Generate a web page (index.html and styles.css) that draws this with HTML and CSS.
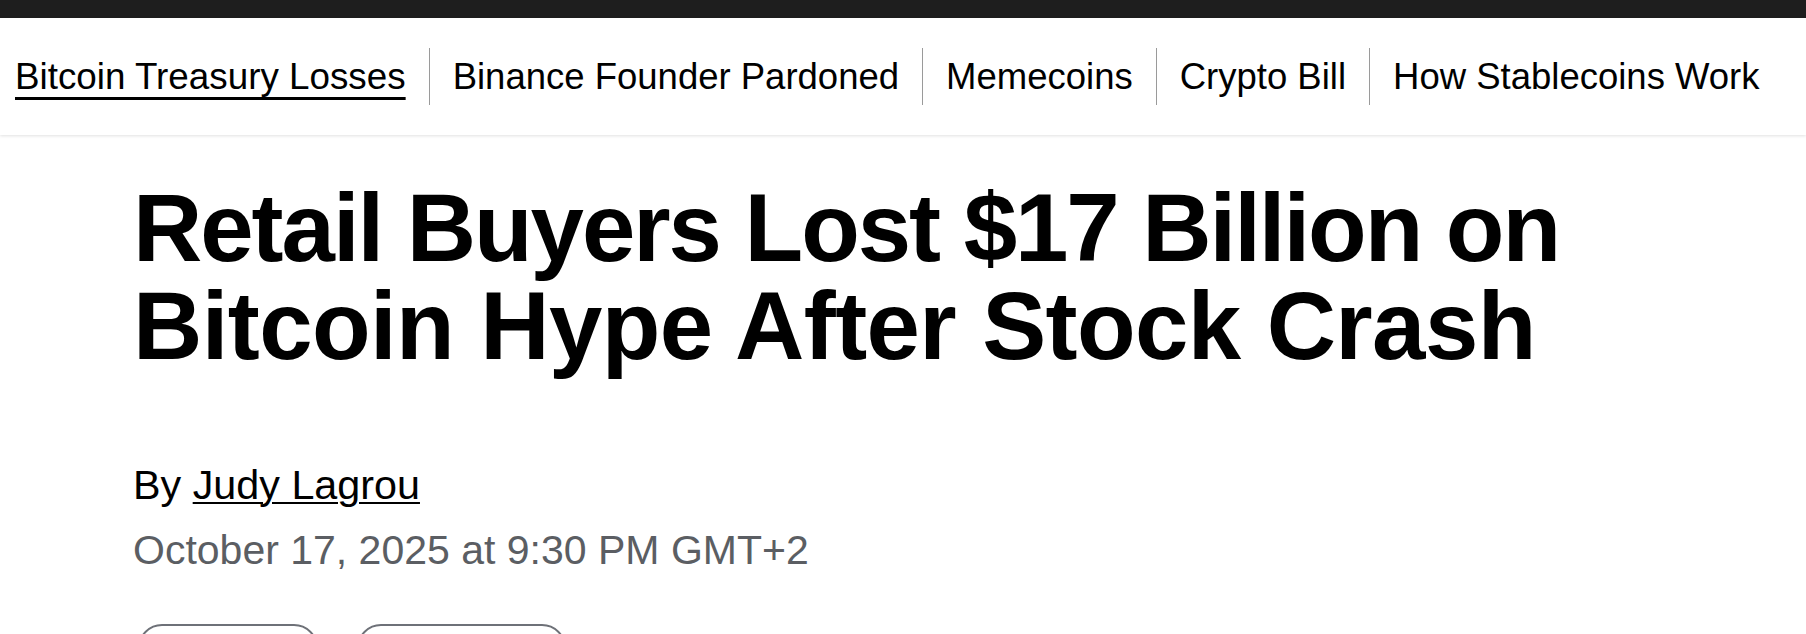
FILE: index.html
```html
<!DOCTYPE html>
<html lang="en">
<head>
<meta charset="utf-8">
<title>Retail Buyers Lost $17 Billion on Bitcoin Hype After Stock Crash</title>
<link rel="stylesheet" href="styles.css">
</head>
<body>
  <div class="topbar"></div>
  <nav class="subnav">
    <a class="subnav-item subnav-item--first" href="#"><span class="subnav-link subnav-link--active">Bitcoin Treasury Losses</span></a>
    <a class="subnav-item" href="#"><span class="subnav-link">Binance Founder Pardoned</span></a>
    <a class="subnav-item" href="#"><span class="subnav-link">Memecoins</span></a>
    <a class="subnav-item" href="#"><span class="subnav-link">Crypto Bill</span></a>
    <a class="subnav-item" href="#"><span class="subnav-link">How Stablecoins Work</span></a>
  </nav>
  <main class="article">
    <h1 class="headline"><span class="headline-line headline-line--first">Retail Buyers Lost $17 Billion on</span><span class="headline-line headline-line--second">Bitcoin Hype After Stock Crash</span></h1>
    <p class="byline">By <a class="author" href="#">Judy Lagrou</a></p>
    <p class="dateline">October 17, 2025 at 9:30 PM GMT+2</p>
    <div class="actions">
      <button class="pill pill--save" aria-label="Save"></button>
      <button class="pill pill--share" aria-label="Share"></button>
    </div>
  </main>
</body>
</html>
```

FILE: styles.css
```css
html, body {
  margin: 0;
  padding: 0;
  background: #ffffff;
}

body {
  font-family: "Liberation Sans", Arial, Helvetica, sans-serif;
  color: #000000;
  height: 634px;
  overflow: hidden;
}

.topbar {
  height: 18px;
  background: #1e1e1e;
}

.subnav {
  height: 117px;
  display: flex;
  align-items: center;
  background: #ffffff;
  box-shadow: 0 1px 3px rgba(0, 0, 0, 0.12);
  position: relative;
  z-index: 1;
}

.subnav-item {
  display: block;
  height: 57px;
  line-height: 57px;
  padding: 0 23px;
  border-left: 1.5px solid #9a9a9a;
  font-size: 36.5px;
  color: #000000;
  text-decoration: none;
  white-space: nowrap;
}

.subnav-item--first {
  border-left: none;
  padding-left: 15px;
  font-size: 36.8px;
}

.subnav-link--active {
  text-decoration: underline;
  text-decoration-thickness: 3px;
  text-underline-offset: 8px;
  text-decoration-skip-ink: none;
}

.article {
  padding: 44px 0 0 133px;
}

.headline {
  margin: 0;
  font-size: 96px;
  line-height: 98px;
  font-weight: 700;
  color: #000000;
}

.headline-line {
  display: block;
  white-space: nowrap;
}

.headline-line--first {
  letter-spacing: -2.05px;
}

.headline-line--second {
  letter-spacing: -0.6px;
}

.byline {
  margin: 86px 0 0;
  font-size: 41.3px;
  line-height: 48px;
  color: #000000;
}

.author {
  color: #000000;
  text-decoration: underline;
  text-decoration-thickness: 2px;
  text-underline-offset: 3px;
}

.dateline {
  margin: 17px 0 0;
  font-size: 41px;
  line-height: 48px;
  color: #5b5e63;
}

.actions {
  display: flex;
  gap: 39px;
  margin: 50px 0 0 5px;
}

.pill {
  height: 48px;
  border: 2px solid #6e7178;
  border-radius: 24px;
  background: #ffffff;
  padding: 0;
}

.pill--save {
  width: 180px;
}

.pill--share {
  width: 209px;
}
```
